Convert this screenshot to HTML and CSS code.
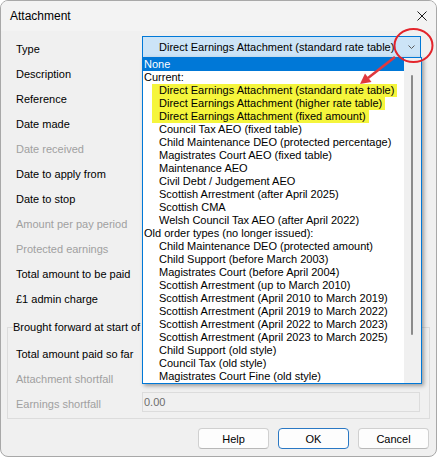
FILE: index.html
```html
<!DOCTYPE html>
<html>
<head>
<meta charset="utf-8">
<link rel="stylesheet" href="styles.css">
</head>
<body>
<div class="window">
  <div class="titlebar">
    <span class="title">Attachment</span>
    <svg class="close" width="10" height="10" viewBox="0 0 10 10"><path d="M0.5 0.5L9.5 9.5M9.5 0.5L0.5 9.5" stroke="#1b1b1b" stroke-width="1" fill="none"/></svg>
  </div>
  <div class="content">
    <div class="form">
      <div class="row">
        <span class="label">Type</span>
        <div class="combo">
          <span class="combo-text">Direct Earnings Attachment (standard rate table)</span>
          <svg class="chev" width="7" height="4" viewBox="0 0 7 4"><path d="M0.5 0.5L3.5 3.5L6.5 0.5" stroke="#5a5a5a" stroke-width="1" fill="none"/></svg>
        </div>
      </div>
      <div class="row"><span class="label">Description</span></div>
      <div class="row"><span class="label">Reference</span></div>
      <div class="row"><span class="label">Date made</span></div>
      <div class="row"><span class="label disabled">Date received</span></div>
      <div class="row"><span class="label">Date to apply from</span></div>
      <div class="row"><span class="label">Date to stop</span></div>
      <div class="row"><span class="label disabled">Amount per pay period</span></div>
      <div class="row"><span class="label disabled">Protected earnings</span></div>
      <div class="row"><span class="label">Total amount to be paid</span></div>
      <div class="row"><span class="label">£1 admin charge</span></div>
    </div>
    <fieldset class="group">
      <legend>Brought forward at start of year</legend>
      <div class="row"><span class="label">Total amount paid so far</span></div>
      <div class="row"><span class="label disabled">Attachment shortfall</span></div>
      <div class="row"><span class="label disabled">Earnings shortfall</span><span class="field">0.00</span></div>
    </fieldset>
    <div class="buttons">
      <button class="btn">Help</button>
      <button class="btn default">OK</button>
      <button class="btn">Cancel</button>
    </div>
  </div>

  <div class="dropdown">
    <div class="list">
      <div class="opt selected">None</div>
      <div class="opt">Current:</div>
      <div class="opt ind"><span class="hl">Direct Earnings Attachment (standard rate table)</span></div>
      <div class="opt ind"><span class="hl">Direct Earnings Attachment (higher rate table)</span></div>
      <div class="opt ind"><span class="hl">Direct Earnings Attachment (fixed amount)</span></div>
      <div class="opt ind">Council Tax AEO (fixed table)</div>
      <div class="opt ind">Child Maintenance DEO (protected percentage)</div>
      <div class="opt ind">Magistrates Court AEO (fixed table)</div>
      <div class="opt ind">Maintenance AEO</div>
      <div class="opt ind">Civil Debt / Judgement AEO</div>
      <div class="opt ind">Scottish Arrestment (after April 2025)</div>
      <div class="opt ind">Scottish CMA</div>
      <div class="opt ind">Welsh Council Tax AEO (after April 2022)</div>
      <div class="opt">Old order types (no longer issued):</div>
      <div class="opt ind">Child Maintenance DEO (protected amount)</div>
      <div class="opt ind">Child Support (before March 2003)</div>
      <div class="opt ind">Magistrates Court (before April 2004)</div>
      <div class="opt ind">Scottish Arrestment (up to March 2010)</div>
      <div class="opt ind">Scottish Arrestment (April 2010 to March 2019)</div>
      <div class="opt ind">Scottish Arrestment (April 2019 to March 2022)</div>
      <div class="opt ind">Scottish Arrestment (April 2022 to March 2023)</div>
      <div class="opt ind">Scottish Arrestment (April 2023 to March 2025)</div>
      <div class="opt ind">Child Support (old style)</div>
      <div class="opt ind">Council Tax (old style)</div>
      <div class="opt ind">Magistrates Court Fine (old style)</div>
    </div>
    <div class="track"><div class="thumb"></div></div>
  </div>

  <svg class="annotation" width="437" height="457" viewBox="0 0 437 457">
    <ellipse cx="413.5" cy="45.5" rx="19" ry="16.5" stroke="#e3242b" stroke-width="2" fill="none"/>
    <line x1="395" y1="57" x2="368" y2="78" stroke="#e0393e" stroke-width="2.6"/>
    <polygon points="360,84 371.5,82 365,73.5" fill="#e0393e"/>
  </svg>
</div>
</body>
</html>
```

FILE: styles.css
```css
body {
  margin: 0;
  background: #ffffff;
  font-family: "Liberation Sans", Arial, sans-serif;
  font-size: 11px;
  color: #000000;
}

.window {
  position: relative;
  width: 437px;
  height: 457px;
  box-sizing: border-box;
  border: 1px solid #a8a8a8;
  border-radius: 8px;
  background: #f0f0f0;
  overflow: hidden;
  display: flex;
  flex-direction: column;
}

.titlebar {
  height: 30px;
  background: #f3f3f3;
  display: flex;
  align-items: center;
  padding-left: 9px;
  font-size: 12px;
}

.close {
  margin-left: auto;
  margin-right: 9px;
}

.content {
  padding-top: 5px;
}

.row {
  display: flex;
  align-items: center;
  height: 25px;
  padding-left: 15px;
}

.label {
  width: 126px;
  flex: none;
  white-space: nowrap;
}

.label.disabled {
  color: #a0a0a0;
}

.combo {
  align-self: flex-start;
  width: 279px;
  height: 22px;
  box-sizing: border-box;
  border: 1px solid #0078d7;
  background: #cce4f7;
  display: flex;
  align-items: center;
  padding-left: 16px;
  white-space: nowrap;
}

.chev {
  margin-left: auto;
  margin-right: 5px;
}

.group {
  margin: 10px 6px 0 6px;
  border: 1px solid #dcdcdc;
  padding: 7px 9px 2px 5px;
}

.group legend {
  padding: 0;
  line-height: 13px;
  white-space: nowrap;
}

.group .row {
  padding-left: 3px;
}

.field {
  flex: 1;
  align-self: flex-start;
  margin-top: 1px;
  height: 20px;
  box-sizing: border-box;
  border: 1px solid #dcdcdc;
  background: #f0f0f0;
  color: #6d6d6d;
  padding-left: 1px;
  line-height: 18px;
}

.buttons {
  display: flex;
  justify-content: flex-end;
  gap: 9px;
  padding-right: 7px;
  margin-top: 9px;
}

.btn {
  width: 71px;
  height: 21px;
  box-sizing: border-box;
  border: 1px solid #d0d0d0;
  border-bottom-color: #b8b8b8;
  border-radius: 4px;
  background: #fdfdfd;
  font-family: "Liberation Sans", Arial, sans-serif;
  font-size: 11px;
  color: #000000;
  padding: 0;
}

.btn.default {
  border-color: #2a78c4;
}

.dropdown {
  position: absolute;
  left: 141px;
  top: 56px;
  width: 280px;
  height: 327px;
  box-sizing: border-box;
  border: 1px solid #0078d7;
  background: #ffffff;
  display: flex;
  box-shadow: 2px 2px 4px rgba(0, 0, 0, 0.35);
}

.list {
  flex: 1;
}

.opt {
  height: 13px;
  line-height: 13px;
  padding-left: 1px;
  white-space: nowrap;
}

.opt.selected {
  background: #0078d7;
  color: #ffffff;
}

.opt.ind {
  padding-left: 16px;
}

.hl {
  display: inline-block;
  height: 13px;
  margin-left: -7px;
  padding: 0 3px 0 7px;
  background: #f5f53c;
}

.track {
  width: 17px;
  background: #f0f0f0;
}

.thumb {
  width: 2px;
  height: 260px;
  margin: 17px 0 0 7px;
  background: #8b8b8b;
  border-radius: 1px;
}

.annotation {
  position: absolute;
  left: -1px;
  top: -1px;
  pointer-events: none;
}
```
